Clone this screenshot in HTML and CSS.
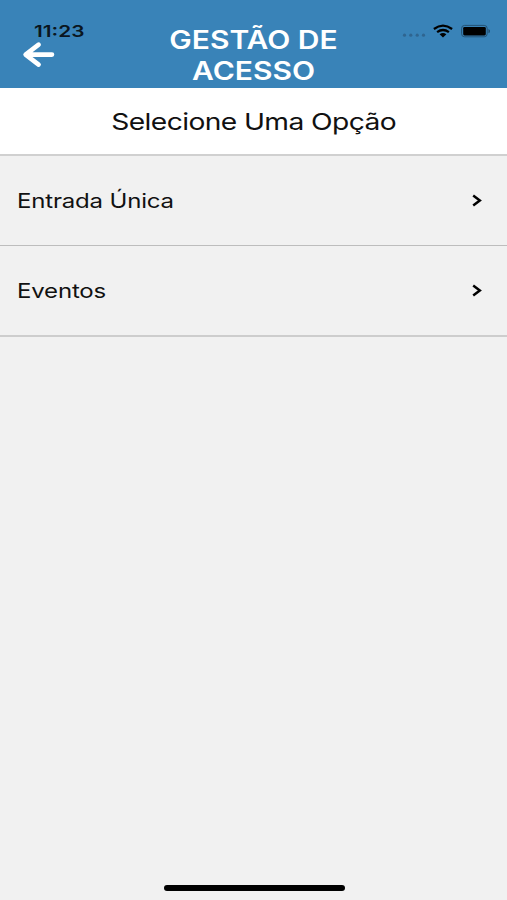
FILE: index.html
```html
<!DOCTYPE html>
<html lang="pt">
<head>
    <meta charset="UTF-8">
    <title>Gestão de Acesso</title>
    <link rel="stylesheet" href="styles.css">
</head>
<body>
    <div class="screen">
        <div class="header">
            <div class="left">
                <span class="clock">11:23</span>
                <svg class="back" width="34" height="28" viewBox="0 0 34 28">
                    <path d="M17.6 3.6 L4.6 13.6 L17.6 23.6 M6 13.6 H31" />
                </svg>
            </div>
            <h1 class="title">GESTÃO DE<br>ACESSO</h1>
            <div class="status">
                <svg width="90" height="16" viewBox="0 0 90 16">
                    <!-- signal -->
                    <g fill="#2f6590">
                        <circle cx="4.5" cy="11.2" r="1.6" />
                        <circle cx="10.8" cy="11.2" r="1.6" />
                        <circle cx="17.2" cy="11.2" r="1.6" />
                        <circle cx="23.5" cy="11.2" r="1.6" />
                    </g>
                    <!-- wifi -->
                    <g fill="none" stroke="#000" stroke-width="2.2">
                        <path d="M33.9 5 Q43 -1.8 52.1 5" />
                        <path d="M37.1 8.2 Q43 3.8 48.9 8.2" />
                    </g>
                    <path d="M39.6 10.3 Q43 7.8 46.4 10.3 L43 13.4 Z" />
                    <!-- battery -->
                    <rect x="61.6" y="1.4" width="25.6" height="11.4" rx="3" fill="none" stroke="#245274" stroke-width="1" />
                    <rect x="63.2" y="3" width="22.6" height="8.4" rx="1.3" />
                    <path d="M88.4 4.9 Q92.2 7.1 88.4 9.3 Z" fill="#245274" />
                </svg>
            </div>
        </div>
        <div class="subtitle"><span>Selecione Uma Opção</span></div>
        <div class="list">
            <div class="row">
                <span class="label">Entrada Única</span>
                <svg class="arrow" width="10" height="14" viewBox="0 0 10 14">
                    <path d="M1.2 1.6 L7.8 6.5 L1.2 11.4" />
                </svg>
            </div>
            <div class="row last">
                <span class="label">Eventos</span>
                <svg class="arrow" width="10" height="14" viewBox="0 0 10 14">
                    <path d="M1.2 1.6 L7.8 6.5 L1.2 11.4" />
                </svg>
            </div>
        </div>
        <div class="home"></div>
    </div>
</body>
</html>
```

FILE: styles.css
```css
body {
    margin: 0;
    font-family: Inter, "Liberation Sans", sans-serif;
    background: #f1f1f1;
    color: #111;
}

.screen {
    display: flex;
    flex-direction: column;
    height: 900px;
    overflow: hidden;
}

.header {
    display: grid;
    grid-template-columns: 130px 1fr 130px;
    height: 88px;
    background: #3983b8;
}

.left {
    display: flex;
    flex-direction: column;
    align-items: flex-start;
    padding-top: 21px;
}

.clock {
    margin-left: 34px;
    font-size: 16px;
    font-weight: 600;
    line-height: 20px;
    color: #0a1620;
    transform: scaleX(1.3);
    transform-origin: left;
}

.back {
    margin-left: 21px;
}

.back path {
    fill: none;
    stroke: #fff;
    stroke-width: 4.6;
    stroke-linecap: round;
    stroke-linejoin: round;
}

.title {
    margin: 0;
    padding-top: 25px;
    font-size: 25px;
    font-weight: 600;
    line-height: 31px;
    text-align: center;
    white-space: nowrap;
    color: #fff;
    transform: scaleX(1.2);
}

.status {
    padding-top: 24px;
    padding-left: 23px;
}

.subtitle {
    height: 66px;
    border-bottom: 2px solid #d0d0d0;
    background: #fff;
    font-size: 23.5px;
    line-height: 68px;
    letter-spacing: -0.5px;
    text-align: center;
}

.subtitle span {
    display: inline-block;
    transform: scaleX(1.2);
}

.row {
    display: flex;
    align-items: center;
    justify-content: space-between;
    height: 89px;
    padding: 0 25px 0 16.5px;
    border-bottom: 1px solid #bdbdbd;
}

.last {
    border-bottom: 2px solid #cdcdcd;
}

.label {
    font-size: 20px;
    letter-spacing: -0.15px;
    transform: scaleX(1.2);
    transform-origin: left;
}

.arrow path {
    fill: none;
    stroke: #000;
    stroke-width: 2.5;
}

.home {
    width: 181px;
    height: 6px;
    margin: auto auto 9px 164px;
    border-radius: 3px;
    background: #000;
}
```
